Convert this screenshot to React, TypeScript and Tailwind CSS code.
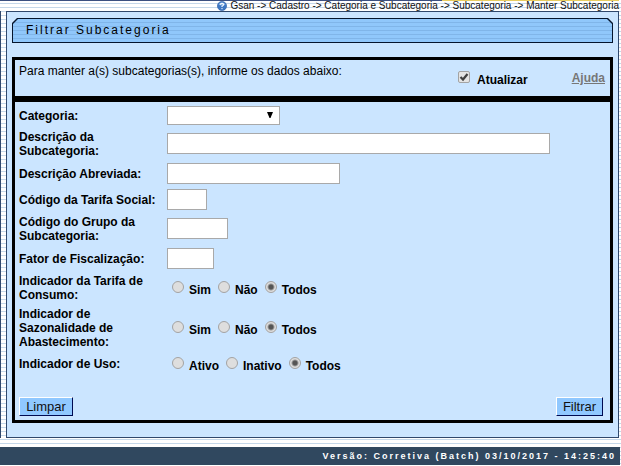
import { ReactNode } from "react";

const inputClass =
  "block h-[21px] border border-[#a9a9a9] bg-white px-1 text-xs outline-none";
const buttonClass =
  "h-[19px] border border-t-white border-l-white border-r-[#000a50] border-b-[#000a50] bg-[#90c8ff] text-[13px] leading-[16px] text-[#111]";

type RowProps = {
  label: string;
  htmlFor?: string;
  height: string;
  children: ReactNode;
};

const Row = ({ label, htmlFor, height, children }: RowProps) => (
  <div className={`flex items-center ${height}`}>
    <label htmlFor={htmlFor} className="w-[148px] shrink-0 pr-1 font-bold">
      {label}
    </label>
    {children}
  </div>
);

type RadiosProps = { name: string; label: string; options: string[] };

const Radios = ({ name, label, options }: RadiosProps) => (
  <div role="radiogroup" aria-label={label} className="flex gap-[7px] pt-[2px] pl-[5px]">
    {options.map((option) => (
      <label key={option} className="flex items-start gap-[5px] font-bold">
        <input
          type="radio"
          name={name}
          value={option}
          defaultChecked={option === "Todos"}
          className="size-3 appearance-none rounded-full border border-[#a3a3a3] bg-[#dedede] checked:bg-[radial-gradient(circle,#555_0_2px,#dedede_4px)]"
        />
        <span className="pt-[2px]">{option}</span>
      </label>
    ))}
  </div>
);

const Breadcrumb = () => (
  <nav className="mr-[2px] flex h-[11px] items-center justify-end gap-[3px] text-[10px] leading-[10px] whitespace-nowrap text-[#111]">
    <svg width="10" height="10" viewBox="0 0 10 10" aria-hidden="true">
      <circle cx="5" cy="5" r="4.6" fill="#3e78c4" stroke="#2b5da6" strokeWidth=".6" />
      <path d="M1.5 3.7a3.8 3.8 0 0 1 7 0Q5 5.2 1.5 3.7Z" fill="#8db8e8" />
      <path
        d="M3.5 3.8Q3.5 2.3 5 2.3T6.5 3.7Q6.5 4.5 5 5.2V6"
        fill="none"
        stroke="#fff"
        strokeWidth="1.1"
      />
      <circle cx="5" cy="7.6" r=".7" fill="#fff" />
    </svg>
    Gsan -&gt; Cadastro -&gt; Categoria e Subcategoria -&gt; Subcategoria -&gt; Manter Subcategoria
  </nav>
);

const App = () => {
  return (
    <div className="min-h-screen bg-white bg-[repeating-linear-gradient(#fff_0_3px,#c5d8ea_3px_4px)] font-['Liberation_Sans',Arial,sans-serif] text-xs leading-[14px] text-black">
      {/* Top rule, the right part is highlighted */}
      <div className="absolute inset-x-0 top-0 mr-[2px] flex h-px">
        <div className="flex-1 bg-[#3c5080]" />
        <div className="w-[177px] bg-[#e8cc60]" />
      </div>
      <Breadcrumb />

      <main className="mr-[2px] border-l border-[#30486c] pl-[5px]">
        <div className="border border-[#30486c] bg-[#cbe5ff] px-[5px] pt-[6px] pb-[14px]">
          <div className="bg-[#05152d] p-px [clip-path:polygon(5px_0,calc(100%-5px)_0,100%_5px,100%_100%,0_100%,0_5px)]">
            <h1 className="h-[23px] bg-[repeating-linear-gradient(#90c7fb_0_3px,#80b5e9_3px_4px)] pl-[13px] leading-[23px] tracking-[2px] [clip-path:polygon(5px_0,calc(100%-5px)_0,100%_5px,100%_100%,0_100%,0_5px)]">
              Filtrar Subcategoria
            </h1>
          </div>

          <form
            className="mt-[14px] border-3 border-black"
            onSubmit={(e) => e.preventDefault()}
          >
            <div className="flex h-[42px] items-start border-b-6 border-black pr-[5px] pl-1">
              <p className="flex-1 pt-1">
                Para manter a(s) subcategorias(s), informe os dados abaixo:
              </p>
              <label className="flex items-start gap-[7px] pt-[11px] font-bold">
                <span className="relative">
                  <input
                    type="checkbox"
                    defaultChecked
                    className="peer block size-3 appearance-none rounded-xs border border-[#a3a3a3] bg-[#e4e4e4]"
                  />
                  <svg
                    viewBox="0 0 12 12"
                    className="pointer-events-none absolute inset-0 hidden size-3 peer-checked:block"
                    fill="none"
                    stroke="#404040"
                    strokeWidth="2.2"
                  >
                    <path d="M2.5 6 5 8.5 9.5 3" />
                  </svg>
                </span>
                <span className="pt-[2px]">Atualizar</span>
              </label>
              <a href="#" className="ml-11 pt-[11px] font-bold text-[#777] underline">
                Ajuda
              </a>
            </div>

            <div className="px-1 pt-[3px]">
              <Row label="Categoria:" htmlFor="categoria" height="h-[21px]">
                <div className="relative">
                  <select
                    id="categoria"
                    className="block h-[19px] w-[113px] appearance-none border border-[#a9a9a9] bg-white outline-none"
                  >
                    <option value=""></option>
                  </select>
                  <svg
                    viewBox="0 0 6 6"
                    className="pointer-events-none absolute top-[6px] right-[7px] size-[6px]"
                  >
                    <path d="M0 0h6L3.5 6h-1Z" />
                  </svg>
                </div>
              </Row>
              <Row label="Descrição da Subcategoria:" htmlFor="descricao" height="h-[35px]">
                <input id="descricao" type="text" className={`${inputClass} w-[383px]`} />
              </Row>
              <Row label="Descrição Abreviada:" htmlFor="abreviada" height="h-[25px]">
                <input id="abreviada" type="text" className={`${inputClass} w-[173px]`} />
              </Row>
              <Row label="Código da Tarifa Social:" htmlFor="tarifa" height="h-[27px]">
                <input id="tarifa" type="text" className={`${inputClass} w-10`} />
              </Row>
              <Row label="Código do Grupo da Subcategoria:" htmlFor="grupo" height="h-[31px]">
                <input id="grupo" type="text" className={`${inputClass} w-[61px]`} />
              </Row>
              <Row label="Fator de Fiscalização:" htmlFor="fator" height="h-[29px]">
                <input id="fator" type="text" className={`${inputClass} w-[47px]`} />
              </Row>
              <Row label="Indicador da Tarifa de Consumo:" height="h-[30px]">
                <Radios
                  name="consumo"
                  label="Indicador da Tarifa de Consumo"
                  options={["Sim", "Não", "Todos"]}
                />
              </Row>
              <Row label="Indicador de Sazonalidade de Abastecimento:" height="h-[50px]">
                <Radios
                  name="sazonalidade"
                  label="Indicador de Sazonalidade de Abastecimento"
                  options={["Sim", "Não", "Todos"]}
                />
              </Row>
              <Row label="Indicador de Uso:" height="h-[21px]">
                <Radios
                  name="uso"
                  label="Indicador de Uso"
                  options={["Ativo", "Inativo", "Todos"]}
                />
              </Row>
            </div>

            <div className="flex justify-between px-1 pt-[23px] pb-1">
              <button type="reset" className={`${buttonClass} w-[54px]`}>
                Limpar
              </button>
              <button type="submit" className={`${buttonClass} mr-[3px] w-[47px]`}>
                Filtrar
              </button>
            </div>
          </form>
        </div>
      </main>

      <footer className="mt-[9px] mr-px h-[18px] bg-[#30485f] pr-1 text-right text-[9px] leading-[18px] font-bold tracking-[2px] text-white">
        Versão: Corretiva (Batch) 03/10/2017 - 14:25:40
      </footer>
    </div>
  );
};

export default App;
